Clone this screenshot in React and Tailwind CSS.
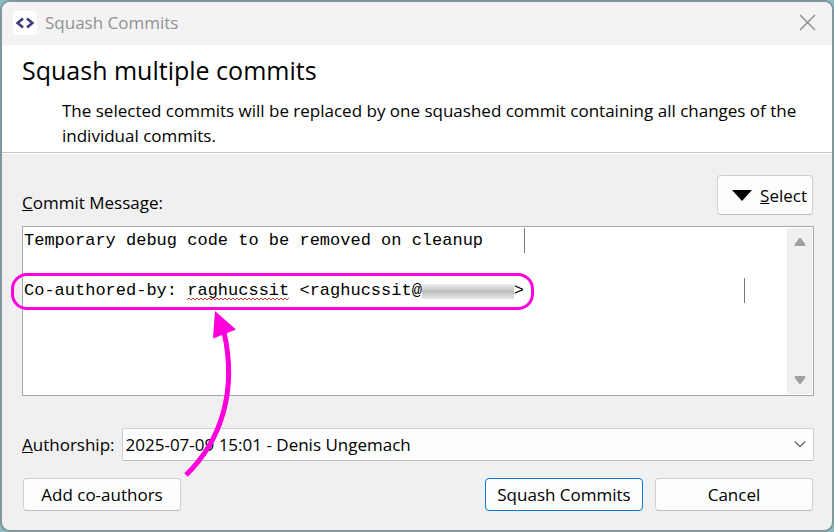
import { useState } from "react";

const buttonClass =
  "h-[33px] w-[158px] rounded border border-[#cfcfcf] border-b-[#bdbdbd] bg-[#fdfdfd] text-center";

function AppIcon() {
  return (
    <span className="flex size-6 items-center justify-center rounded bg-white">
      <svg width="20" height="12" viewBox="0 0 20 12" fill="none" stroke="#3c3a80" strokeWidth="2.6">
        <path d="M8 1.4 2.6 6 8 10.6" />
        <path d="M12 1.4 17.4 6 12 10.6" />
      </svg>
    </span>
  );
}

function TitleBar() {
  return (
    <div className="flex h-[43px] items-center gap-2 bg-[#f3f3f3] pr-4 pb-0.5 pl-[11px] text-[#919191]">
      <AppIcon />
      <span className="grow">Squash Commits</span>
      <button type="button" aria-label="Close">
        <svg width="17" height="17" viewBox="0 0 17 17" fill="none" stroke="#8b8b8b" strokeWidth="1.4">
          <path d="M1 1 16 16M16 1 1 16" />
        </svg>
      </button>
    </div>
  );
}

function Scrollbar() {
  return (
    <div className="m-px flex w-[25px] flex-col items-center justify-between bg-[#f0f0f0] py-[7px]">
      <button type="button" aria-label="Scroll up">
        <svg className="block" width="12" height="14" viewBox="0 0 12 14" fill="#a0a0a0">
          <path d="M4.8 3.8Q6 1.8 7.2 3.8L11.4 9.6Q11.8 11 10.6 11H1.4Q.2 11 .6 9.6Z" />
        </svg>
      </button>
      <button type="button" aria-label="Scroll down">
        <svg className="block" width="12" height="14" viewBox="0 0 12 14" fill="#a0a0a0">
          <path d="M4.8 10.2Q6 12.2 7.2 10.2L11.4 4.4Q11.8 3 10.6 3H1.4Q.2 3 .6 4.4Z" />
        </svg>
      </button>
    </div>
  );
}

// Highlight ring, spelling squiggle, hidden mail domain and the pointing arrow
function Annotations() {
  return (
    <div className="pointer-events-none absolute inset-0 z-10" aria-hidden="true">
      <span className="absolute top-px left-[501px] h-[25px] w-px bg-[#7d7377]" />
      <span className="absolute top-[51px] left-[721px] h-[25px] w-px bg-[#7d7377]" />
      <span className="absolute top-[57px] left-[399px] h-[15px] w-[92px] bg-linear-to-b from-[#f0f0f0] via-[#bcbebe] to-[#e8e8e8]" />
      <svg className="absolute top-[70px] left-[164px]" width="102" height="4" fill="none" stroke="#d83a3a">
        <defs>
          <pattern id="squiggle" width="4" height="4" patternUnits="userSpaceOnUse">
            <path d="M0 3 2 1 4 3" />
          </pattern>
        </defs>
        <rect width="102" height="4" fill="url(#squiggle)" stroke="none" />
      </svg>
      <span className="absolute top-[46px] left-[-12px] h-[37px] w-[523px] rounded-2xl border-3 border-[#ff00dc]" />
      <svg
        className="absolute top-[83px] left-[157px]"
        width="60"
        height="170"
        viewBox="180 310 60 170"
        fill="none"
      >
        <path d="M186 475C222 440 237 390 224 332" stroke="#ff00dc" strokeWidth="5" />
        <path d="M215 311 236 329.500 213 338.500Z" fill="#ff00dc" />
      </svg>
    </div>
  );
}

export default function App() {
  const [message, setMessage] = useState(
    "Temporary debug code to be removed on cleanup\n\nCo-authored-by: raghucssit <raghucssit@         >"
  );

  return (
    <div className="flex min-h-screen bg-[#8fbcc4] font-['Open_Sans','Noto_Sans',sans-serif] text-[17px] leading-[25px] text-black">
      <div className="flex grow flex-col overflow-hidden rounded-[10px] border-2 border-[#7d979d] bg-[#f0f0f0]">
        <TitleBar />

        <header className="border-b border-[#c4c4c4] bg-white px-5 pt-[7px]">
          <h1 className="text-[25px] leading-9">Squash multiple commits</h1>
          <p className="mt-[10px] pb-1 pl-10">
            The selected commits will be replaced by one squashed commit containing all changes of the individual
            commits.
          </p>
        </header>

        <form
          className="flex grow flex-col border-t border-white pt-[21px] pr-[18px] pb-[19px] pl-5"
          onSubmit={(e) => e.preventDefault()}
        >
          <div className="flex items-end justify-between pr-px">
            <label htmlFor="message">
              <u>C</u>ommit Message:
            </label>
            <button
              type="button"
              className="flex h-10 w-24 items-center justify-end gap-2 rounded border border-[#cfcfcf] border-b-[#bdbdbd] bg-[#fdfdfd] pr-[5px]"
            >
              <svg width="20" height="11" viewBox="0 0 20 11">
                <path d="M0 0H20L10 11Z" />
              </svg>
              <span>
                <u>S</u>elect
              </span>
            </button>
          </div>

          <div className="relative mt-[11px] flex min-h-[170px] grow border border-[#a6a6ae] bg-white">
            <textarea
              id="message"
              spellCheck={false}
              className="grow resize-none overflow-hidden px-px py-px font-['Liberation_Mono',monospace] text-[17px] leading-[25px] outline-none"
              value={message}
              onChange={(e) => setMessage(e.target.value)}
            />
            <Scrollbar />
            <Annotations />
          </div>

          <div className="mt-8 flex items-center gap-[7px]">
            <label htmlFor="authorship">
              <u>A</u>uthorship:
            </label>
            <div className="relative grow">
              <select
                id="authorship"
                className="block h-[33px] w-full appearance-none rounded-xs border border-[#cfcfcf] border-b-[#bdbdbd] bg-[#fdfdfd] px-[3px]"
              >
                <option>2025-07-09 15:01 - Denis Ungemach</option>
              </select>
              <svg
                className="pointer-events-none absolute top-3 right-2"
                width="12"
                height="9"
                viewBox="0 0 12 9"
                fill="none"
                stroke="#5c5c5c"
                strokeWidth="1.2"
              >
                <path d="M.8 1.500 6 6.700 11.200 1.500" />
              </svg>
            </div>
          </div>

          <div className="mt-[17px] flex gap-3 px-px">
            <button type="button" className={buttonClass}>
              Add co-authors
            </button>
            <button
              type="submit"
              className="ml-auto h-[33px] w-[158px] rounded border border-[#0078d4] bg-[#fdfdfd] text-center"
            >
              Squash Commits
            </button>
            <button type="button" className={buttonClass}>
              Cancel
            </button>
          </div>
        </form>
      </div>
    </div>
  );
}
